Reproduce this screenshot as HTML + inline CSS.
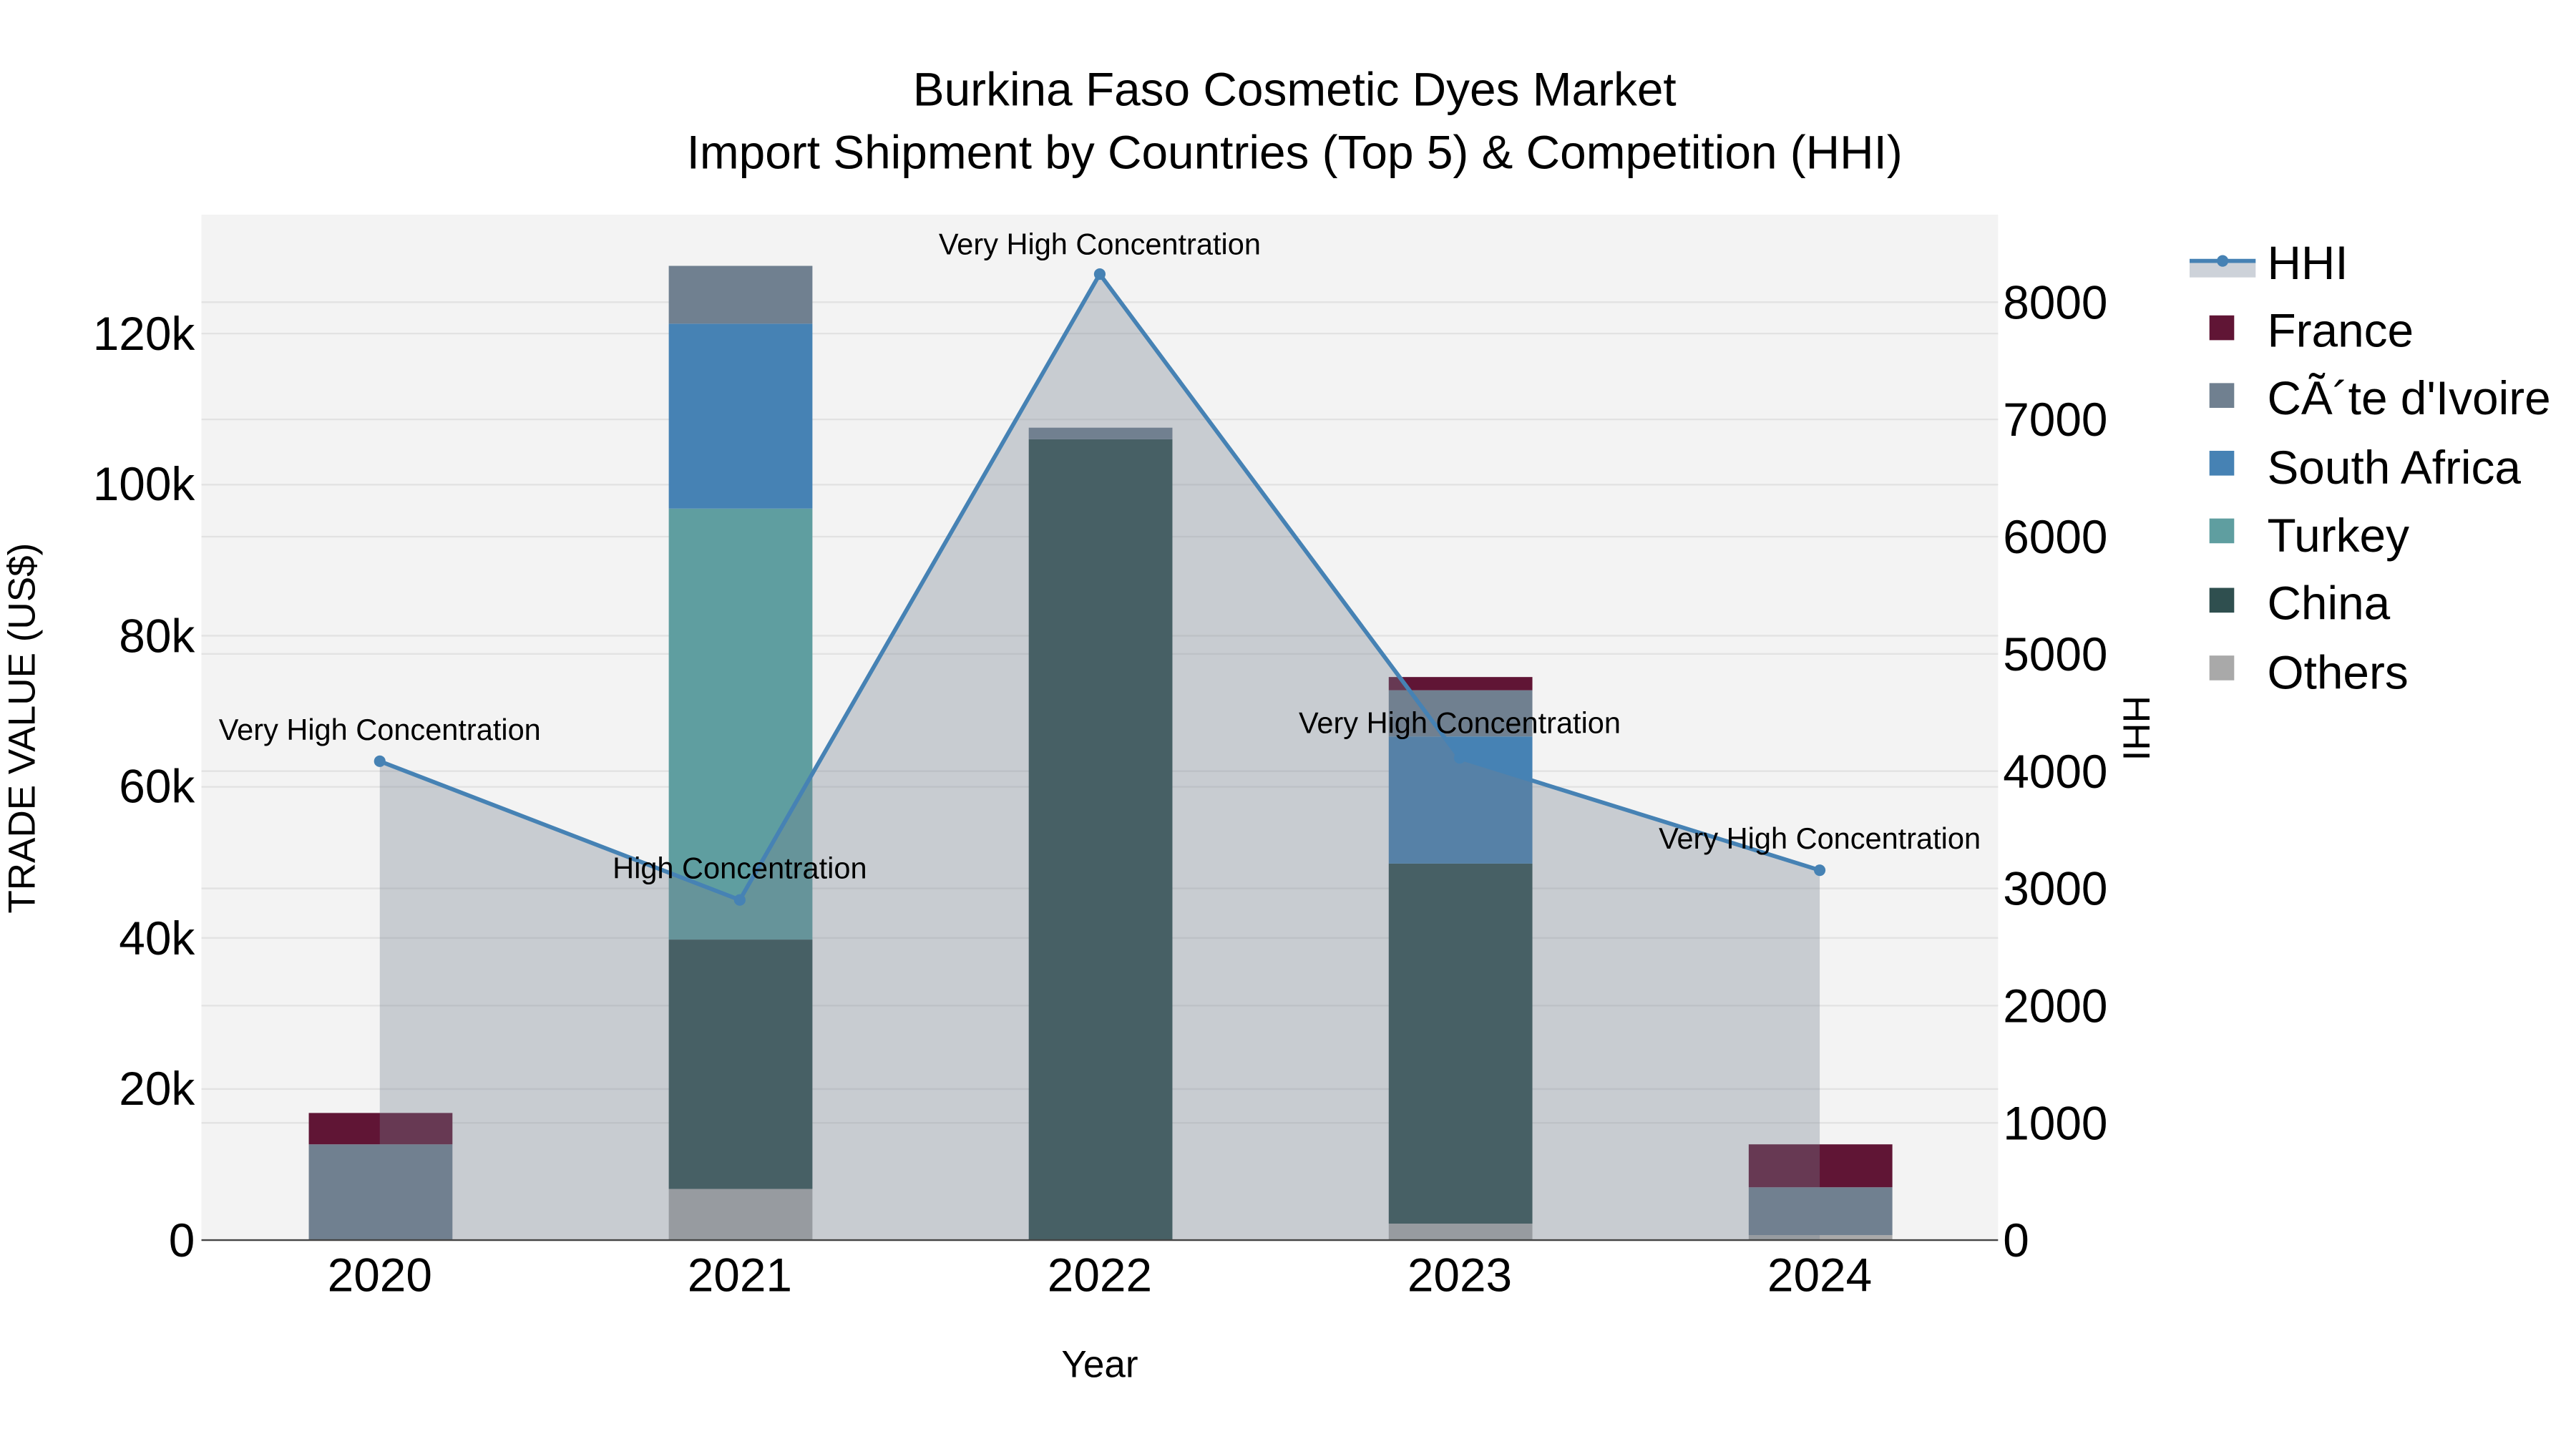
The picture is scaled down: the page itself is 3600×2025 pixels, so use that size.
<!DOCTYPE html>
<html><head><meta charset="utf-8"><style>html,body{margin:0;padding:0;background:#fff}svg{display:block}</style></head>
<body>
<svg width="3600" height="2025" viewBox="0 0 1560 877.5" xmlns="http://www.w3.org/2000/svg" font-family="Liberation Sans, sans-serif">
<rect width="1560" height="877.5" fill="#fff"/>
<rect x="122" y="130" width="1088" height="621" fill="#f3f3f3"/>
<g stroke="#e2e2e2" stroke-width="1">
<line x1="122" x2="1210" y1="659.5" y2="659.5"/><line x1="122" x2="1210" y1="568" y2="568"/><line x1="122" x2="1210" y1="476.5" y2="476.5"/><line x1="122" x2="1210" y1="385" y2="385"/><line x1="122" x2="1210" y1="293.5" y2="293.5"/><line x1="122" x2="1210" y1="202" y2="202"/>
<line x1="122" x2="1210" y1="680" y2="680"/><line x1="122" x2="1210" y1="609" y2="609"/><line x1="122" x2="1210" y1="538" y2="538"/><line x1="122" x2="1210" y1="467" y2="467"/><line x1="122" x2="1210" y1="396" y2="396"/><line x1="122" x2="1210" y1="325" y2="325"/><line x1="122" x2="1210" y1="254" y2="254"/><line x1="122" x2="1210" y1="183" y2="183"/>
</g>
<g>
<rect x="187" y="693" width="87" height="58" fill="#708090"/><rect x="187" y="674" width="87" height="19" fill="#601535"/>
<rect x="405" y="720" width="87" height="31" fill="#a9a9a9"/><rect x="405" y="569" width="87" height="151" fill="#2f4f4f"/><rect x="405" y="308" width="87" height="261" fill="#5f9ea0"/><rect x="405" y="196" width="87" height="112" fill="#4682b4"/><rect x="405" y="161" width="87" height="35" fill="#708090"/>
<rect x="623" y="266" width="87" height="485" fill="#2f4f4f"/><rect x="623" y="259" width="87" height="7" fill="#708090"/>
<rect x="841" y="741" width="87" height="10" fill="#a9a9a9"/><rect x="841" y="523" width="87" height="218" fill="#2f4f4f"/><rect x="841" y="446" width="87" height="77" fill="#4682b4"/><rect x="841" y="418" width="87" height="28" fill="#708090"/><rect x="841" y="410" width="87" height="8" fill="#601535"/>
<rect x="1059" y="748" width="87" height="3" fill="#a9a9a9"/><rect x="1059" y="719" width="87" height="29" fill="#708090"/><rect x="1059" y="693" width="87" height="26" fill="#601535"/>
</g>
<polygon points="230,751 230,461 448,545 666,166 884,459 1102,527 1102,751" fill="rgba(118,130,145,0.34)"/>
<polyline points="230,461 448,545 666,166 884,459 1102,527" fill="none" stroke="#4682b4" stroke-width="2.5"/>
<g fill="#4682b4"><circle cx="230" cy="461" r="3.5"/><circle cx="448" cy="545" r="3.5"/><circle cx="666" cy="166" r="3.5"/><circle cx="884" cy="459" r="3.5"/><circle cx="1102" cy="527" r="3.5"/></g>
<line x1="122" x2="1210" y1="751" y2="751" stroke="#444" stroke-width="1"/>
<g font-size="18" fill="#000" text-anchor="middle">
<text x="230" y="448">Very High Concentration</text><text x="448" y="532">High Concentration</text><text x="666" y="154">Very High Concentration</text><text x="884" y="444">Very High Concentration</text><text x="1102" y="514">Very High Concentration</text>
</g>
<g font-size="28.5" fill="#000" text-anchor="end">
<text x="118" y="761">0</text><text x="118" y="669">20k</text><text x="118" y="578">40k</text><text x="118" y="486">60k</text><text x="118" y="395">80k</text><text x="118" y="303">100k</text><text x="118" y="212">120k</text>
</g>
<g font-size="28.5" fill="#000">
<text x="1213" y="761">0</text><text x="1213" y="690">1000</text><text x="1213" y="619">2000</text><text x="1213" y="548">3000</text><text x="1213" y="477">4000</text><text x="1213" y="406">5000</text><text x="1213" y="335">6000</text><text x="1213" y="264">7000</text><text x="1213" y="193">8000</text>
</g>
<g font-size="28.5" fill="#000" text-anchor="middle">
<text x="230" y="782">2020</text><text x="448" y="782">2021</text><text x="666" y="782">2022</text><text x="884" y="782">2023</text><text x="1102" y="782">2024</text>
</g>
<text x="666" y="834" font-size="23" text-anchor="middle">Year</text>
<text transform="translate(21,441) rotate(-90)" font-size="23" text-anchor="middle">TRADE VALUE (US$)</text>
<text transform="translate(1286,441) rotate(90)" font-size="23" text-anchor="middle">HHI</text>
<text x="784" y="64" font-size="28.5" text-anchor="middle">Burkina Faso Cosmetic Dyes Market</text>
<text x="784" y="102" font-size="28.5" text-anchor="middle">Import Shipment by Countries (Top 5) &amp; Competition (HHI)</text>
<rect x="1326" y="159" width="40" height="9" fill="#cdd2d9"/>
<line x1="1326" x2="1366" y1="158" y2="158" stroke="#4682b4" stroke-width="2.5"/><circle cx="1346" cy="158" r="3.5" fill="#4682b4"/>
<g font-size="28.5" fill="#000">
<text x="1373" y="169">HHI</text><text x="1373" y="210">France</text><text x="1373" y="251">CÃ´te d'Ivoire</text><text x="1373" y="293">South Africa</text><text x="1373" y="334">Turkey</text><text x="1373" y="375">China</text><text x="1373" y="417">Others</text>
</g>
<rect x="1338" y="191" width="15" height="15" fill="#601535"/>
<rect x="1338" y="232" width="15" height="15" fill="#708090"/>
<rect x="1338" y="273" width="15" height="15" fill="#4682b4"/>
<rect x="1338" y="314" width="15" height="15" fill="#5f9ea0"/>
<rect x="1338" y="356" width="15" height="15" fill="#2f4f4f"/>
<rect x="1338" y="397" width="15" height="15" fill="#a9a9a9"/>
</svg>
</body></html>
